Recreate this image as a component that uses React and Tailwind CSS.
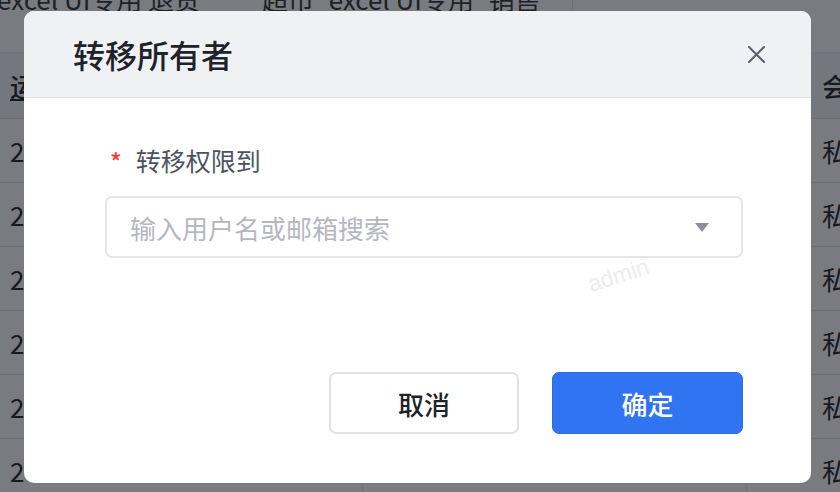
import React from 'react';

const font = { fontFamily: '"Noto Sans CJK SC", "Noto Sans", sans-serif' };

// Backdrop table rows (dimmed by overlay)
const rows = [0, 1, 2, 3, 4, 5];

const Backdrop = () => (
  <div className="w-[840px] h-[492px] overflow-hidden bg-white text-[#1f2329]">
    {/* top row, mostly scrolled out */}
    <div className="flex h-[53px] border-b border-[#eceef2]">
      <div className="w-[572px] shrink-0 flex gap-[62px] -mt-[21px] text-[26px] text-[#333] whitespace-nowrap">
        <span className="-ml-[3px]">excel UI专用 退货</span>
        <span>超市_excel UI专用_销售</span>
      </div>
      <div className="flex-1 border-l border-[#e5e7eb]"></div>
    </div>
    {/* header row */}
    <div className="flex h-[66px] items-center bg-[#f4f5f8] border-b border-[#e3e5ea] text-[26px] font-medium whitespace-nowrap">
      <div className="w-[812px] shrink-0 pl-[10px]">
        <span className="underline">运营</span>
      </div>
      <span className="pl-[10px]">会员</span>
    </div>
    {rows.map((r) => (
      <div key={r} className="flex h-[64px] items-center border-b border-[#e3e5ea] text-[26px] whitespace-nowrap">
        <div className="w-[363px] shrink-0 pl-[10px] border-r border-[#e3e5ea] h-full flex items-center">2024</div>
        <div className="w-[384px] shrink-0 border-r border-[#e3e5ea] h-full"></div>
        <div className="flex-1 min-w-0 pl-[75px] h-full flex items-center">私有</div>
      </div>
    ))}
  </div>
);

export default function App() {
  return (
    <div className="relative w-[840px] h-[492px] overflow-hidden" style={font}>
      <Backdrop />
      <div className="absolute inset-0 bg-[rgba(16,19,28,0.56)]"></div>

      {/* Modal */}
      <div className="absolute left-[24px] top-[11px] w-[787px] h-[472px] bg-white rounded-[10px] overflow-hidden flex flex-col">
        {/* Header */}
        <div className="h-[87px] bg-[#f0f1f5] border-b border-[#e2e3e8] flex items-center justify-between pl-[49px] pr-[46px] shrink-0">
          <h2 className="text-[32px] font-medium text-[#1f2329] leading-none">转移所有者</h2>
          <button className="w-[17px] h-[17px] flex items-center justify-center">
            <svg width="17" height="17" viewBox="0 0 17 17" fill="none">
              <path d="M1 1L16 16M16 1L1 16" stroke="#5c606b" strokeWidth="2" strokeLinecap="round" />
            </svg>
          </button>
        </div>

        {/* Body */}
        <div className="relative flex-1 flex flex-col pl-[81px] pr-[68px] pt-[45px]">
          <label className="h-[36px] flex items-center text-[25px] text-[#4e5260] mb-[17px]">
            <span className="text-[#f5402f] text-[24px] ml-[5px] mr-[14px] font-medium">*</span>
            转移权限到
          </label>

          <div className="h-[62px] border-2 border-[#e4e5ea] rounded-[7px] flex items-center justify-between pl-[23px] pr-[32px]">
            <span className="text-[26px] text-[#b4b7bf]">输入用户名或邮箱搜索</span>
            <svg width="14" height="9" viewBox="0 0 14 9">
              <path d="M0 0H14L7 9Z" fill="#8b8f99" />
            </svg>
          </div>

          {/* watermark */}
          <span className="absolute left-[563px] top-[160px] -rotate-[18deg] text-[23px] text-[#ececee] select-none" style={{ fontFamily: '"Liberation Sans", sans-serif' }}>
            admin
          </span>

          <div className="mt-[114px] flex justify-end gap-[33px]">
            <button className="w-[190px] h-[62px] rounded-[7px] border-2 border-[#e2e2e5] bg-white text-[26px] font-medium text-[#1f2329]">
              取消
            </button>
            <button className="w-[191px] h-[62px] rounded-[7px] bg-[#3174f1] border border-[#2c6ce0] text-[26px] font-medium text-white">
              确定
            </button>
          </div>
        </div>
      </div>
    </div>
  );
}
